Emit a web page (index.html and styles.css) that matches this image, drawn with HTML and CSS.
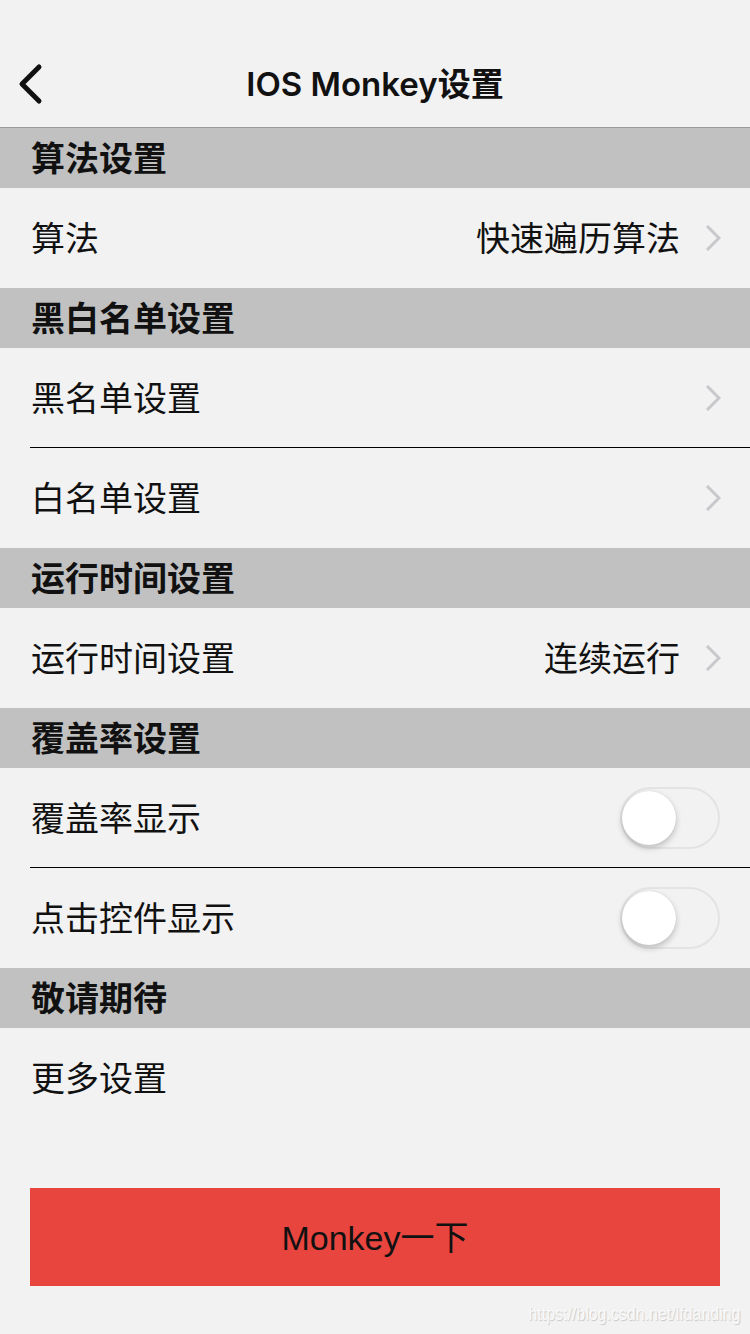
FILE: index.html
```html
<!DOCTYPE html>
<html lang="zh-CN">
<head>
<meta charset="utf-8">
<title>IOS Monkey设置</title>
<link rel="stylesheet" href="styles.css">
</head>
<body>
<div class="page">
  <header class="nav">
    <svg class="back" width="30" height="42" viewBox="0 0 30 42"><path d="M24 4 L7 21 L24 38" fill="none" stroke="#111" stroke-width="5" stroke-linecap="round" stroke-linejoin="round"/></svg>
    <h1 class="title">IOS Monkey设置</h1>
  </header>

  <div class="section">算法设置</div>
  <div class="row"><span class="label">算法</span><span class="value">快速遍历算法</span><svg class="chev" width="16" height="28" viewBox="0 0 16 28"><path d="M2 2 L14 14 L2 26" fill="none" stroke="#c7c7cc" stroke-width="3"/></svg></div>

  <div class="section">黑白名单设置</div>
  <div class="row sep"><span class="label">黑名单设置</span><svg class="chev" width="16" height="28" viewBox="0 0 16 28"><path d="M2 2 L14 14 L2 26" fill="none" stroke="#c7c7cc" stroke-width="3"/></svg></div>
  <div class="row"><span class="label">白名单设置</span><svg class="chev" width="16" height="28" viewBox="0 0 16 28"><path d="M2 2 L14 14 L2 26" fill="none" stroke="#c7c7cc" stroke-width="3"/></svg></div>

  <div class="section">运行时间设置</div>
  <div class="row"><span class="label">运行时间设置</span><span class="value">连续运行</span><svg class="chev" width="16" height="28" viewBox="0 0 16 28"><path d="M2 2 L14 14 L2 26" fill="none" stroke="#c7c7cc" stroke-width="3"/></svg></div>

  <div class="section">覆盖率设置</div>
  <div class="row sep"><span class="label">覆盖率显示</span><span class="toggle"><span class="knob"></span></span></div>
  <div class="row"><span class="label">点击控件显示</span><span class="toggle"><span class="knob"></span></span></div>

  <div class="section">敬请期待</div>
  <div class="row"><span class="label">更多设置</span></div>

  <div class="btn-wrap"><div class="btn">Monkey一下</div></div>
  <div class="watermark">https://blog.csdn.net/lfdanding</div>
</div>
</body>
</html>
```
FILE: styles.css
```css
* { box-sizing: border-box; }
html, body { margin: 0; padding: 0; }
body {
  background: #f2f2f2;
  font-family: "Noto Sans CJK SC", "Liberation Sans", sans-serif;
  color: #111;
}
.page { width: 750px; height: 1334px; position: relative; overflow: hidden; }
.nav {
  height: 128px;
  border-bottom: 1px solid #9a9a9a;
  position: relative;
  display: flex;
  align-items: center;
  justify-content: center;
  padding-top: 42px;
}
.back { position: absolute; left: 15px; top: 63px; }
.title {
  margin: 0;
  font-size: 33px;
  font-weight: 600;
  font-family: "Inter", "Noto Sans CJK SC", sans-serif;
  line-height: 1;
}
.section {
  height: 60px;
  background: #c1c1c1;
  padding-left: 31px;
  padding-bottom: 2px;
  font-size: 34px;
  font-weight: 700;
  display: flex;
  align-items: center;
  line-height: 1;
}
.row {
  height: 100px;
  display: flex;
  align-items: center;
  padding-left: 31px;
  padding-right: 30px;
  font-size: 34px;
  line-height: 1;
  position: relative;
}
.label, .value { padding-bottom: 3px; }
.row.sep::after {
  content: "";
  position: absolute;
  left: 30px; right: 0; bottom: 0;
  height: 1.5px;
  background: #000;
}
.label { flex: 1; }
.value { margin-right: 25px; }
.chev { display: block; margin-right: -1px; }
.toggle {
  width: 100px; height: 62px;
  border: 2px solid #e3e3e3;
  border-radius: 31px;
  position: relative;
  background: #f2f2f2;
}
.knob {
  position: absolute;
  left: 0; top: 2px;
  width: 54px; height: 54px;
  border-radius: 50%;
  background: #fff;
  box-shadow: 0 3px 6px rgba(0,0,0,0.22), 0 0 1px rgba(0,0,0,0.15);
}
.btn-wrap { padding: 60px 30px 0; }
.btn {
  height: 98px;
  background: #e8453f;
  display: flex;
  align-items: center;
  justify-content: center;
  padding-bottom: 4px;
  font-family: "Liberation Sans", "Noto Sans CJK SC", sans-serif;
  font-size: 34px;
  color: #111;
}
.watermark {
  position: absolute;
  right: 10px;
  bottom: 9px;
  font-family: "Liberation Sans", sans-serif;
  font-size: 19px;
  color: #fafafa;
  text-shadow: 1px 1px 1px rgba(0,0,0,0.18);
  transform: scaleX(0.84);
  transform-origin: right center;
}
```
